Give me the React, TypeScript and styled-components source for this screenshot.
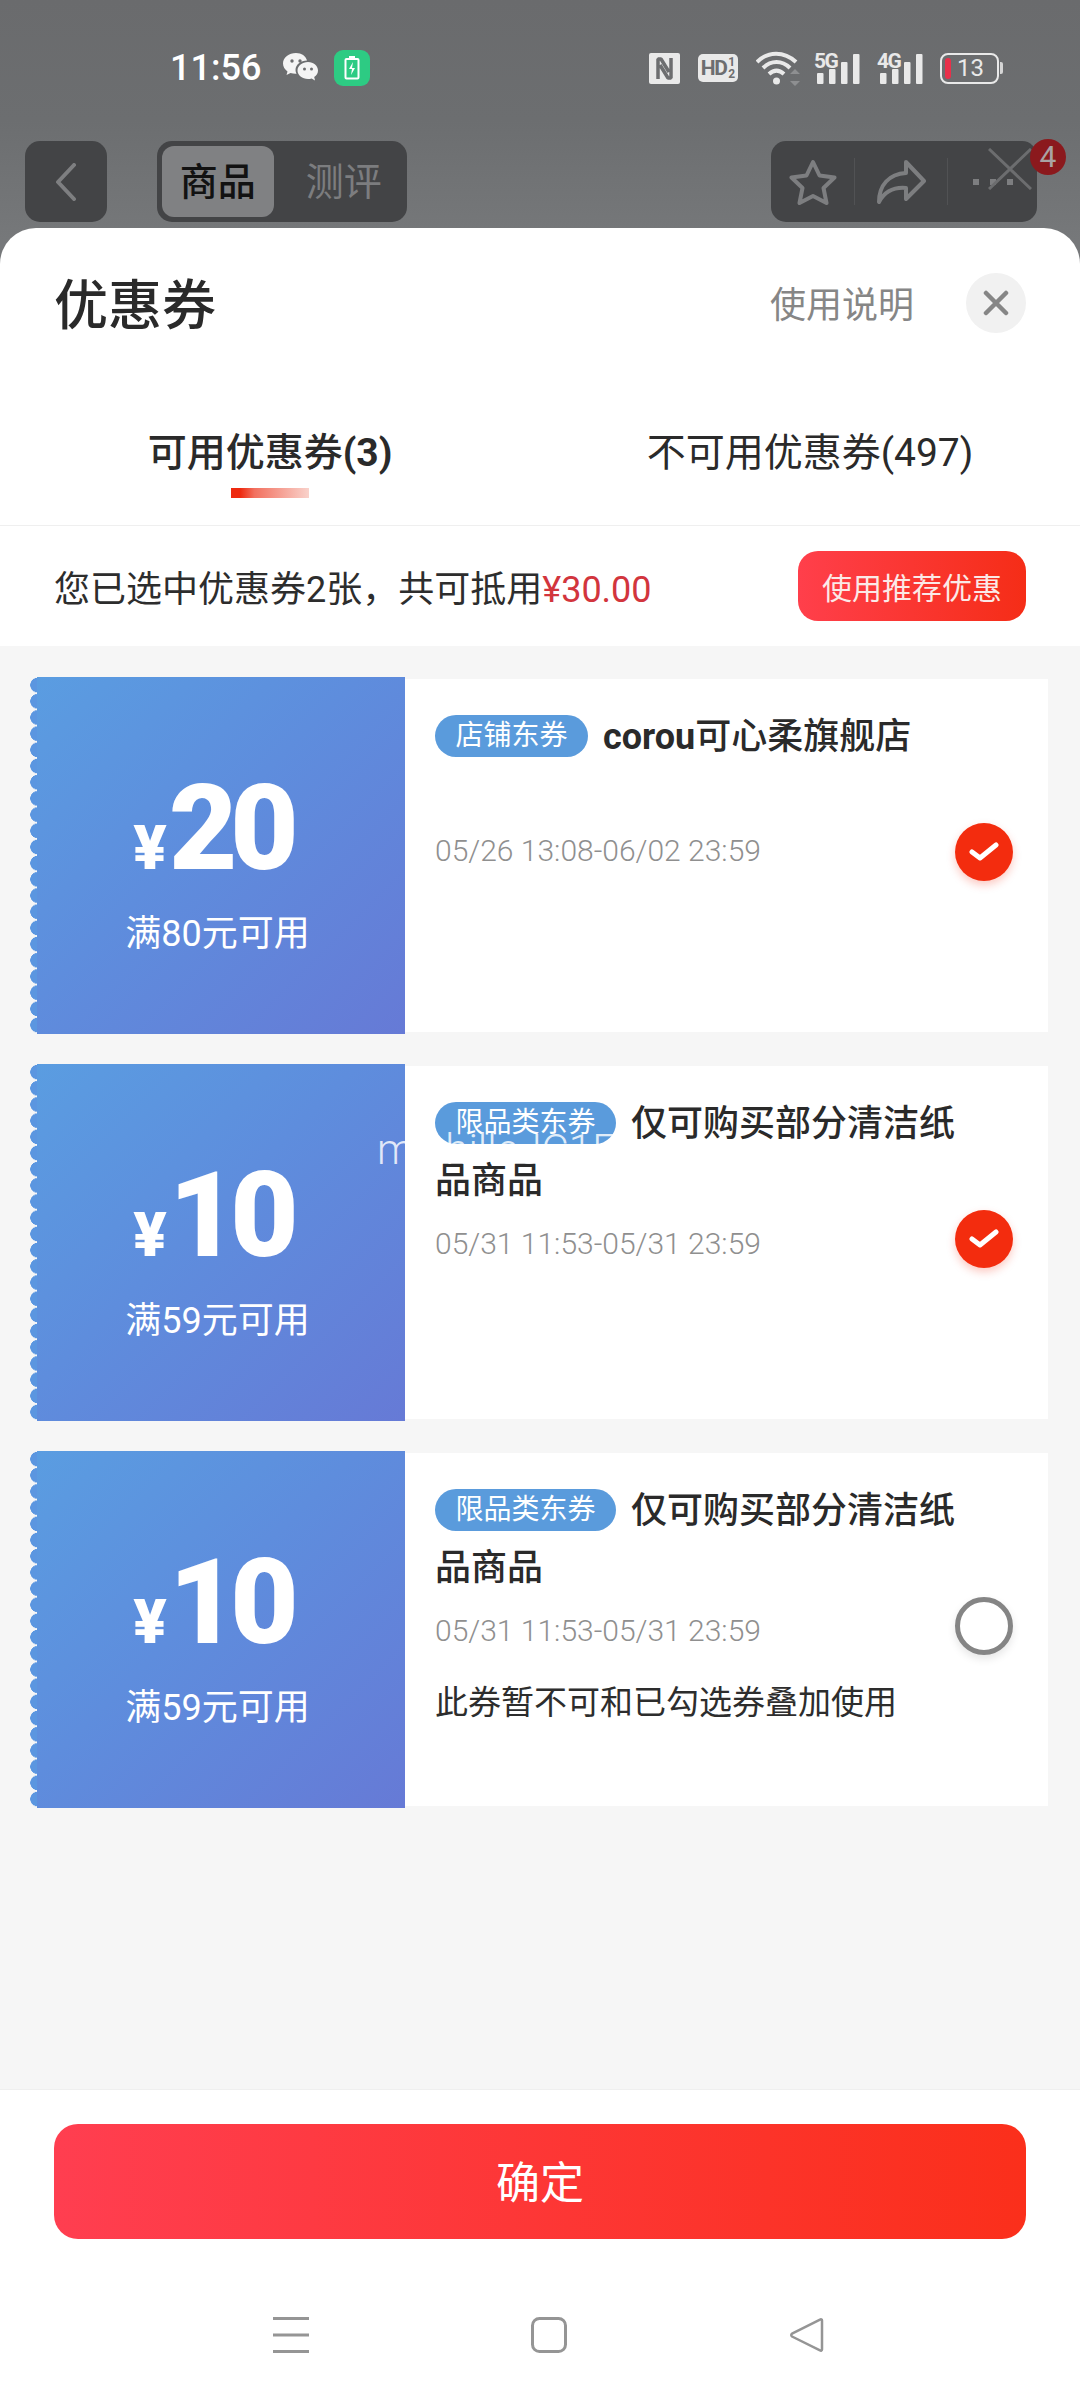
import React from 'react';
import styled, { createGlobalStyle } from 'styled-components';

const GlobalStyle = createGlobalStyle`
  html, body {
    margin: 0;
    padding: 0;
    background: #6e7072;
  }
  * {
    box-sizing: border-box;
  }
  body {
    font-family: Roboto, "Noto Sans CJK SC", sans-serif;
  }
`;

const Page = styled.div`
  position: relative;
  width: 1080px;
  height: 2400px;
  display: flex;
  flex-direction: column;
  overflow: hidden;
  background: linear-gradient(180deg, #6a6b6d 0%, #6c6e70 5%, #76787a 10%);
`;

const StatusBar = styled.div`
  height: 141px;
  flex: none;
  display: flex;
  align-items: flex-start;
  justify-content: space-between;
  padding: 50px 77px 0 170px;
`;

const StatusLeft = styled.div`
  display: flex;
  align-items: center;
  height: 36px;
`;

const Time = styled.span`
  font-size: 36px;
  font-weight: 500;
  color: #fff;
  width: 88px;
  line-height: 36px;
  white-space: nowrap;
`;

const BatteryApp = styled.div`
  width: 36px;
  height: 36px;
  margin-left: 15px;
  border-radius: 9px;
  background: #2dcb83;
  display: flex;
  align-items: center;
  justify-content: center;
`;

const StatusRight = styled.div`
  display: flex;
  align-items: center;
  height: 36px;
`;

const HdBadge = styled.div`
  width: 40px;
  height: 28px;
  margin-left: 18px;
  border-radius: 5px;
  background: #e9e9e9;
  color: #6d6e70;
  display: flex;
  align-items: center;
  justify-content: center;
  font-size: 21px;
  line-height: 1;
  font-weight: 700;
  letter-spacing: -1.5px;
`;

const HdFraction = styled.span`
  display: flex;
  flex-direction: column;
  align-items: center;
  margin-left: 2px;
  font-size: 12px;
  line-height: 12px;
  letter-spacing: 0;
`;

const Signal = styled.div<{ $gap: number }>`
  position: relative;
  width: 46px;
  height: 32px;
  margin-left: ${(p) => p.$gap}px;
`;

const SignalLabel = styled.span`
  position: absolute;
  left: 0;
  top: -2px;
  font-size: 21px;
  line-height: 22px;
  font-weight: 700;
  color: #e9e9e9;
  letter-spacing: -1.5px;
`;

const BatteryBody = styled.div`
  width: 59px;
  height: 31px;
  margin-left: 17px;
  border: 2.5px solid #e9e9e9;
  border-radius: 8px;
  display: flex;
  align-items: center;
  padding-left: 3px;
  color: #e9e9e9;
  font-size: 24px;
  line-height: 1;
`;

const BatteryLevel = styled.span`
  width: 6px;
  height: 21px;
  border-radius: 3px;
  background: #e8304a;
  margin-right: 6px;
`;

const BatteryCap = styled.span`
  width: 3px;
  height: 12px;
  margin-left: 1px;
  background: #d5d5d5;
  border-radius: 0 2px 2px 0;
`;

const NavRow = styled.div`
  height: 87px;
  flex: none;
  display: flex;
  align-items: flex-start;
  padding: 0 43px 0 25px;
`;

const NavBox = styled.div`
  height: 81px;
  border-radius: 15px;
  background: #434446;
  display: flex;
  align-items: center;
`;

const BackBox = styled(NavBox)`
  width: 82px;
  justify-content: center;
`;

const Segment = styled(NavBox)`
  width: 250px;
  margin-left: 50px;
  padding: 5px;
`;

const SegmentItem = styled.div<{ $active?: boolean }>`
  width: ${(p) => (p.$active ? '114px' : '131px')};
  height: 71px;
  border-radius: 12px;
  display: flex;
  align-items: center;
  justify-content: center;
  padding: ${(p) => (p.$active ? '0 0 5px' : '0 0 5px 12px')};
  font-size: 38px;
  line-height: 1;
  font-family: "Noto Sans CJK SC", sans-serif;
  font-weight: ${(p) => (p.$active ? 500 : 400)};
  color: ${(p) => (p.$active ? '#121212' : '#7c7d7f')};
  background: ${(p) => (p.$active ? '#808183' : 'transparent')};
`;

const Toolbar = styled(NavBox)`
  position: relative;
  width: 266px;
  margin-left: auto;
`;

const ToolCell = styled.div<{ $width: number; $divider?: boolean }>`
  width: ${(p) => p.$width}px;
  height: 47px;
  display: flex;
  align-items: center;
  justify-content: center;
  border-right: ${(p) => (p.$divider ? '1px solid #515254' : 'none')};
`;

const OverlayClose = styled.svg`
  position: absolute;
  left: 217px;
  top: 7px;
`;

const Badge = styled.div`
  position: absolute;
  right: -29px;
  top: -2px;
  width: 36px;
  height: 36px;
  border-radius: 50%;
  background: #8b191d;
  color: #a9a3a4;
  font-size: 30px;
  line-height: 36px;
  text-align: center;
`;

const Sheet = styled.div`
  flex: 1;
  display: flex;
  flex-direction: column;
  background: #fff;
  border-radius: 36px 36px 0 0;
`;

const SheetHeader = styled.div`
  height: 154px;
  flex: none;
  display: flex;
  align-items: center;
  padding: 0 54px;
`;

const SheetTitle = styled.div`
  font-size: 54px;
  line-height: 1;
  font-weight: 500;
  color: #2a2a2a;
  font-family: "Noto Sans CJK SC", sans-serif;
  flex: 1;
  margin-top: -6px;
`;

const HelpLink = styled.div`
  font-size: 36px;
  line-height: 1;
  color: #868686;
  font-family: "Noto Sans CJK SC", sans-serif;
  margin: -6px 52px 0 0;
`;

const CloseButton = styled.div`
  width: 60px;
  height: 60px;
  border-radius: 50%;
  background: #f1f1f1;
  display: flex;
  align-items: center;
  justify-content: center;
  margin-top: -5px;
`;

const Tabs = styled.div`
  height: 144px;
  flex: none;
  display: grid;
  grid-template-columns: 1fr 1fr;
  border-bottom: 1px solid #efefef;
`;

const Tab = styled.div<{ $active?: boolean }>`
  position: relative;
  display: flex;
  align-items: flex-start;
  justify-content: center;
  padding-top: 47px;
  font-size: 39px;
  line-height: 48px;
  color: #2a2a2a;
  font-weight: ${(p) => (p.$active ? 700 : 400)};
  font-family: Roboto, "Noto Sans CJK SC", sans-serif;
`;

const TabMark = styled.span`
  position: absolute;
  left: 231px;
  top: 106px;
  width: 78px;
  height: 10px;
  background: linear-gradient(90deg, #ee2a10 0%, #ee2a10 12%, #f2705f 30%, #f9d2cb 100%);
`;

const TabLabel = styled.span<{ $active?: boolean }>`
  font-weight: ${(p) => (p.$active ? 500 : 400)};
`;

const SelectionRow = styled.div`
  height: 120px;
  flex: none;
  display: flex;
  align-items: center;
  justify-content: space-between;
  padding: 0 54px;
  font-size: 36px;
  color: #2d2d2d;
  font-family: Roboto, "Noto Sans CJK SC", sans-serif;
`;

const Price = styled.span`
  color: #d2353d;
`;

const RecommendButton = styled.div`
  width: 228px;
  height: 70px;
  border-radius: 20px;
  background: linear-gradient(90deg, #ff3f4b 0%, #f52d17 100%);
  color: #fbe9e7;
  font-size: 30px;
  display: flex;
  align-items: center;
  justify-content: center;
  font-family: "Noto Sans CJK SC", sans-serif;
`;

const List = styled.div`
  flex: 1;
  position: relative;
  background: #f6f6f6;
  padding: 31px 32px 0 30px;
  display: flex;
  flex-direction: column;
  gap: 30px;
`;

const Card = styled.div`
  height: 357px;
  display: flex;
  align-items: center;
`;

const Ticket = styled.div`
  position: relative;
  width: 375px;
  height: 100%;
  flex: none;
  background: linear-gradient(135deg, #5a9de1 0%, #5e8ddd 45%, #667ad6 100%);
  display: flex;
  flex-direction: column;
  align-items: center;
  color: #fff;
  padding-top: 84px;

  /* scalloped tear-off edge */
  &::before {
    content: '';
    position: absolute;
    left: 0;
    top: 0;
    bottom: 0;
    width: 7px;
    background: radial-gradient(circle at 7.5px 50%, #5b96e0 7px, #f6f6f6 7.5px) 0 0 / 7px 16.2px repeat-y;
  }
`;

const Amount = styled.div`
  display: flex;
  align-items: baseline;
  height: 136px;
  color: #fff;
  font-weight: 900;
  font-size: 118px;
  line-height: 136px;
  letter-spacing: -7px;
  margin-left: -10px;
`;

const Yen = styled.span`
  font-size: 62px;
  font-weight: 900;
  letter-spacing: 0;
  margin-right: 2px;
`;

const Threshold = styled.div`
  font-size: 36px;
  line-height: 44px;
  margin-top: 15px;
  font-family: Roboto, "Noto Sans CJK SC", sans-serif;
`;

const Info = styled.div`
  position: relative;
  flex: 1;
  height: 353px;
  background: #fff;
  padding: 30px 120px 0 30px;
`;

const Heading = styled.div`
  font-size: 36px;
  line-height: 57px;
  color: #2a2a2a;
  font-family: Roboto, "Noto Sans CJK SC", sans-serif;
  font-weight: 500;
  min-height: 114px;
  margin-right: -36px;
`;

const Tag = styled.span`
  display: inline-block;
  height: 42px;
  line-height: 42px;
  padding: 0 20.5px;
  margin-right: 15px;
  border-radius: 21px;
  background: #5a9bdc;
  color: #fff;
  font-size: 28px;
  font-weight: 400;
  vertical-align: 4px;
`;

const Store = styled.span`
  font-weight: 700;
`;

const Period = styled.div<{ $compact?: boolean }>`
  font-size: 30px;
  line-height: 40px;
  color: #8f8f8f;
  font-weight: 300;
  margin-top: ${(p) => (p.$compact ? '8px' : '14px')};
  white-space: nowrap;
`;

const Note = styled.div`
  font-size: 33px;
  line-height: 44px;
  color: #2d2d2d;
  margin-top: 27px;
  white-space: nowrap;
  font-family: "Noto Sans CJK SC", sans-serif;
  margin-right: -60px;
`;

const Check = styled.div<{ $checked?: boolean }>`
  position: absolute;
  right: 35px;
  top: 144px;
  width: 58px;
  height: 58px;
  border-radius: 50%;
  display: flex;
  align-items: center;
  justify-content: center;
  background: ${(p) => (p.$checked ? '#f32c0e' : '#fff')};
  border: ${(p) => (p.$checked ? 'none' : '5px solid #858585')};
  box-shadow: 0 4px 8px ${(p) => (p.$checked ? 'rgba(243, 44, 14, 0.25)' : 'rgba(0, 0, 0, 0.1)')};
`;

const Watermark = styled.div`
  position: absolute;
  left: 377px;
  top: 480px;
  font-size: 42px;
  line-height: 48px;
  font-weight: 300;
  color: rgba(255, 255, 255, 0.82);
  white-space: nowrap;
`;

const Footer = styled.div`
  height: 311px;
  flex: none;
  border-top: 1px solid #efefef;
  padding: 34px 54px 0;
  display: flex;
  flex-direction: column;
  align-items: stretch;
`;

const ConfirmButton = styled.div`
  height: 115px;
  border-radius: 24px;
  padding-bottom: 3px;
  background: linear-gradient(90deg, #ff3e50 0%, #fb2f1b 100%);
  color: #fff;
  font-size: 44px;
  display: flex;
  align-items: center;
  justify-content: center;
  font-family: "Noto Sans CJK SC", sans-serif;
`;

const SystemNav = styled.div`
  margin-top: 78px;
  display: flex;
  justify-content: flex-start;
  align-items: center;
  height: 36px;
  padding-left: 219px;
  gap: 222px;
`;

const SystemNavItem = styled.svg`
  display: block;
`;

const WeChatIcon = () => (
  <svg width="36" height="30" viewBox="0 0 36 30" style={{ marginLeft: 25 }}>
    <path d="M13 0C6 0 0 4.6 0 10.500c0 3.200 1.800 6 4.500 8L3.500 22l4-2c1.500.5 3.500.8 5 .8h1c-.6-1.300-1-2.500-1-3.800 0-5.500 5.500-9.500 11.500-9.500C23 3 18.500 0 13 0z" fill="#f4f4f4" />
    <path d="M25 9c-5.700 0-10.500 3.700-10.500 8.500S19.300 26 25 26c1.300 0 2.500-.2 3.600-.6l3.400 2-.8-3.300c2.400-1.500 3.800-4 3.800-6.600C35 12.700 30.700 9 25 9z" fill="#f4f4f4" />
    <circle cx="9" cy="8" r="1.700" fill="#6d6e70" />
    <circle cx="17" cy="8" r="1.700" fill="#6d6e70" />
    <circle cx="21.500" cy="16" r="1.500" fill="#6d6e70" />
    <circle cx="28.500" cy="16" r="1.500" fill="#6d6e70" />
  </svg>
);

const NfcIcon = () => (
  <svg width="31" height="31" viewBox="0 0 31 31">
    <rect width="31" height="31" rx="2" fill="#e9e9e9" />
    <path d="M9 26V6h3l8 13M22 5v20h-3l-8-13" fill="none" stroke="#6d6e70" strokeWidth="3.500" strokeLinejoin="bevel" />
  </svg>
);

const WifiIcon = () => (
  <svg width="44" height="35" viewBox="0 0 44 35" style={{ marginLeft: 18 }}>
    <path d="M1 11C12 0 28 0 40 11M7 17C15 9 26 9 34 17M13 23c5-4.500 10-4.500 15 0" fill="none" stroke="#e9e9e9" strokeWidth="4" />
    <circle cx="20.500" cy="30" r="3.500" fill="#e9e9e9" />
    <path d="M39 18l5 5H34zM39 35l5-5H34z" fill="#8e8f91" />
  </svg>
);

const SignalBars = () => (
  <svg width="46" height="32" viewBox="0 0 46 32" style={{ display: 'block' }}>
    <rect x="3" y="21" width="6.500" height="11" rx="1" fill="#e9e9e9" />
    <rect x="15" y="17" width="6.500" height="15" rx="1" fill="#e9e9e9" />
    <rect x="27" y="10" width="6.500" height="22" rx="1" fill="#e9e9e9" />
    <rect x="39" y="2" width="6.500" height="30" rx="1" fill="#e9e9e9" />
  </svg>
);

const CheckMark = () => (
  <svg width="30" height="22" viewBox="0 0 30 22">
    <path d="M3 11l8 6L27 4" fill="none" stroke="#fff" strokeWidth="5" strokeLinecap="round" strokeLinejoin="round" />
  </svg>
);

type Coupon = {
  amount: string;
  threshold: string;
  tag: string;
  title: string;
  store?: boolean;
  period: string;
  note?: string;
  checked?: boolean;
};

const coupons: Coupon[] = [
  {
    amount: '20',
    threshold: '满80元可用',
    tag: '店铺东券',
    title: 'corou',
    store: true,
    period: '05/26 13:08-06/02 23:59',
    checked: true,
  },
  {
    amount: '10',
    threshold: '满59元可用',
    tag: '限品类东券',
    title: '仅可购买部分清洁纸品商品',
    period: '05/31 11:53-05/31 23:59',
    checked: true,
  },
  {
    amount: '10',
    threshold: '满59元可用',
    tag: '限品类东券',
    title: '仅可购买部分清洁纸品商品',
    period: '05/31 11:53-05/31 23:59',
    note: '此券暂不可和已勾选券叠加使用',
  },
];

const App: React.FC = () => {
  return (
    <Page>
      <GlobalStyle />
      <StatusBar>
        <StatusLeft>
          <Time>11:56</Time>
          <WeChatIcon />
          <BatteryApp>
            <svg width="16" height="24" viewBox="0 0 16 24">
              <rect x="5" y="0" width="6" height="3" fill="#fff" />
              <rect x="1.500" y="3" width="13" height="19.500" rx="1" fill="none" stroke="#fff" strokeWidth="2" />
              <path d="M9 6l-4 7h3l-1 6 4-7H8z" fill="#fff" />
            </svg>
          </BatteryApp>
        </StatusLeft>
        <StatusRight>
          <NfcIcon />
          <HdBadge>
            HD
            <HdFraction>
              <span>1</span>
              <span>2</span>
            </HdFraction>
          </HdBadge>
          <WifiIcon />
          <Signal $gap={14}>
            <SignalLabel>5G</SignalLabel>
            <SignalBars />
          </Signal>
          <Signal $gap={17}>
            <SignalLabel>4G</SignalLabel>
            <SignalBars />
          </Signal>
          <BatteryBody>
            <BatteryLevel />
            13
          </BatteryBody>
          <BatteryCap />
        </StatusRight>
      </StatusBar>

      <NavRow>
        <BackBox>
          <svg width="24" height="38" viewBox="0 0 24 38">
            <path d="M20 2L4 19l16 17" fill="none" stroke="#7e7f81" strokeWidth="4" strokeLinecap="round" strokeLinejoin="round" />
          </svg>
        </BackBox>
        <Segment>
          <SegmentItem $active>商品</SegmentItem>
          <SegmentItem>测评</SegmentItem>
        </Segment>
        <Toolbar>
          <ToolCell $width={84} $divider>
            <svg width="48" height="46" viewBox="0 0 48 46">
              <path d="M24 3l6.500 13.500 15 2-11 10.500 3 15L24 37l-13.500 7 3-15L2.500 18.500l15-2z" fill="none" stroke="#7d7e80" strokeWidth="4" strokeLinejoin="round" />
            </svg>
          </ToolCell>
          <ToolCell $width={93} $divider>
            <svg width="50" height="44" viewBox="0 0 50 44">
              <path d="M30 2l18 19-18 18V28C18 27 9 31 3 42c0-17 10-28 27-29z" fill="none" stroke="#7d7e80" strokeWidth="4" strokeLinejoin="round" />
            </svg>
          </ToolCell>
          <ToolCell $width={89}>
            <svg width="40" height="8" viewBox="0 0 40 8">
              <rect x="0" y="1" width="6" height="6" fill="#7d7e80" />
              <rect x="17" y="1" width="6" height="6" fill="#7d7e80" />
              <rect x="34" y="1" width="6" height="6" fill="#7d7e80" />
            </svg>
          </ToolCell>
          <OverlayClose width="44" height="42" viewBox="0 0 44 42">
            <path d="M1 1l42 40M43 1L1 41" stroke="#6c6d6f" strokeWidth="3" />
          </OverlayClose>
          <Badge>4</Badge>
        </Toolbar>
      </NavRow>

      <Sheet>
        <SheetHeader>
          <SheetTitle>优惠券</SheetTitle>
          <HelpLink>使用说明</HelpLink>
          <CloseButton>
            <svg width="26" height="26" viewBox="0 0 26 26">
              <path d="M3 3l20 20M23 3L3 23" stroke="#868686" strokeWidth="4.500" strokeLinecap="round" />
            </svg>
          </CloseButton>
        </SheetHeader>

        <Tabs>
          <Tab $active>
            <TabLabel $active>可用优惠券</TabLabel>(3)
            <TabMark />
          </Tab>
          <Tab>
            <TabLabel>不可用优惠券</TabLabel>(497)
          </Tab>
        </Tabs>

        <SelectionRow>
          <span>
            您已选中优惠券2张，共可抵用<Price>¥30.00</Price>
          </span>
          <RecommendButton>使用推荐优惠</RecommendButton>
        </SelectionRow>

        <List>
          {coupons.map((coupon, index) => (
            <Card key={index}>
              <Ticket>
                <Amount>
                  <Yen>¥</Yen>
                  {coupon.amount}
                </Amount>
                <Threshold>{coupon.threshold}</Threshold>
              </Ticket>
              <Info>
                <Heading>
                  <Tag>{coupon.tag}</Tag>
                  {coupon.store ? (
                    <>
                      <Store>{coupon.title}</Store>可心柔旗舰店
                    </>
                  ) : (
                    coupon.title
                  )}
                </Heading>
                <Period $compact={coupon.store}>{coupon.period}</Period>
                {coupon.note && <Note>{coupon.note}</Note>}
                <Check $checked={coupon.checked}>{coupon.checked && <CheckMark />}</Check>
              </Info>
            </Card>
          ))}
          <Watermark>michilleJC1E</Watermark>
        </List>

        <Footer>
          <ConfirmButton>确定</ConfirmButton>
          <SystemNav>
            <SystemNavItem width="36" height="36" viewBox="0 0 36 36">
              <path d="M0 1.500h36M0 18h36M0 34.500h36" stroke="#959595" strokeWidth="3" />
            </SystemNavItem>
            <SystemNavItem width="36" height="36" viewBox="0 0 36 36">
              <rect x="1.500" y="1.500" width="33" height="33" rx="7" fill="none" stroke="#959595" strokeWidth="3" />
            </SystemNavItem>
            <SystemNavItem width="36" height="36" viewBox="0 0 36 36">
              <path d="M33 3.500v29c0 1-1 1.500-2 .8L3 19.500c-1-.8-1-2 0-2.800L31 2.700c1-.7 2-.2 2 .8z" fill="none" stroke="#959595" strokeWidth="2.500" strokeLinejoin="round" />
            </SystemNavItem>
          </SystemNav>
        </Footer>
      </Sheet>
    </Page>
  );
};

export default App;
